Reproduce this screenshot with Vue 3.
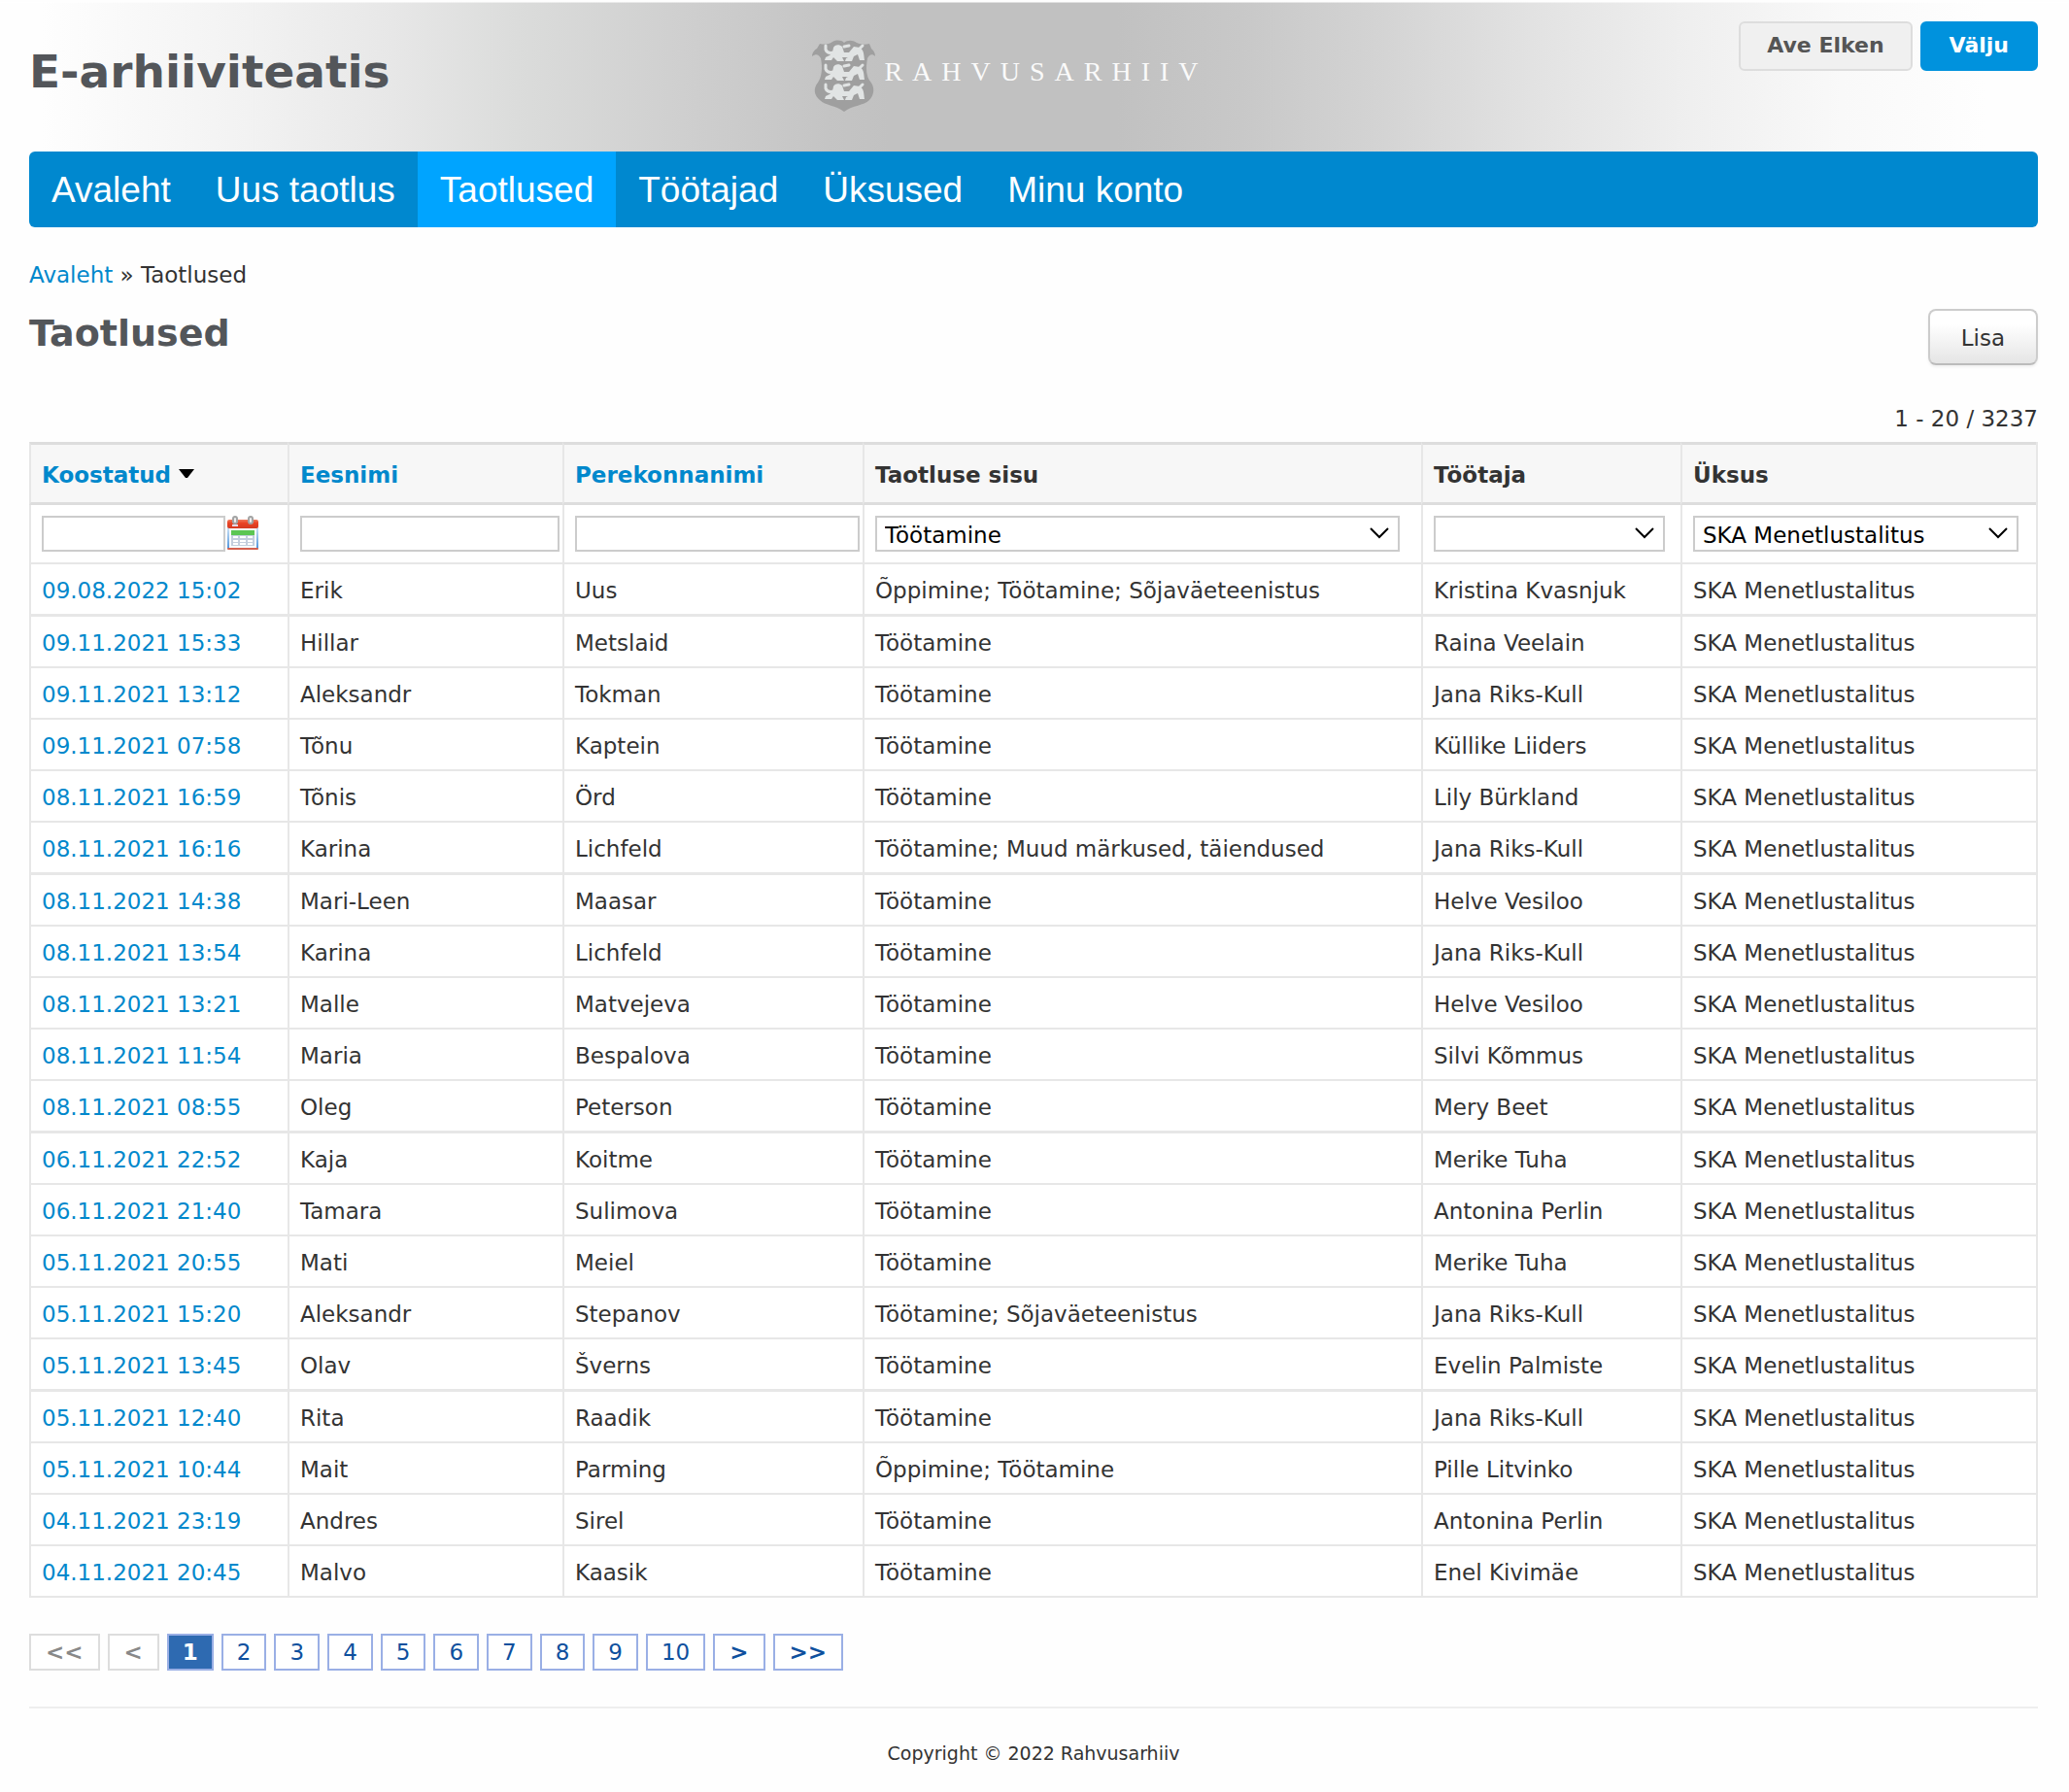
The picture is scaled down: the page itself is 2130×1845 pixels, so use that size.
<script setup>
import { ref } from 'vue'

const menu = ['Avaleht', 'Uus taotlus', 'Taotlused', 'Töötajad', 'Üksused', 'Minu konto']
const current = 'Taotlused'

const unit = 'SKA Menetlustalitus'
const content = ref('Töötamine')
const worker = ref('')
const department = ref(unit)

const rows = [
  ['09.08.2022 15:02', 'Erik', 'Uus', 'Õppimine; Töötamine; Sõjaväeteenistus', 'Kristina Kvasnjuk'],
  ['09.11.2021 15:33', 'Hillar', 'Metslaid', 'Töötamine', 'Raina Veelain'],
  ['09.11.2021 13:12', 'Aleksandr', 'Tokman', 'Töötamine', 'Jana Riks-Kull'],
  ['09.11.2021 07:58', 'Tõnu', 'Kaptein', 'Töötamine', 'Küllike Liiders'],
  ['08.11.2021 16:59', 'Tõnis', 'Örd', 'Töötamine', 'Lily Bürkland'],
  ['08.11.2021 16:16', 'Karina', 'Lichfeld', 'Töötamine; Muud märkused, täiendused', 'Jana Riks-Kull'],
  ['08.11.2021 14:38', 'Mari-Leen', 'Maasar', 'Töötamine', 'Helve Vesiloo'],
  ['08.11.2021 13:54', 'Karina', 'Lichfeld', 'Töötamine', 'Jana Riks-Kull'],
  ['08.11.2021 13:21', 'Malle', 'Matvejeva', 'Töötamine', 'Helve Vesiloo'],
  ['08.11.2021 11:54', 'Maria', 'Bespalova', 'Töötamine', 'Silvi Kõmmus'],
  ['08.11.2021 08:55', 'Oleg', 'Peterson', 'Töötamine', 'Mery Beet'],
  ['06.11.2021 22:52', 'Kaja', 'Koitme', 'Töötamine', 'Merike Tuha'],
  ['06.11.2021 21:40', 'Tamara', 'Sulimova', 'Töötamine', 'Antonina Perlin'],
  ['05.11.2021 20:55', 'Mati', 'Meiel', 'Töötamine', 'Merike Tuha'],
  ['05.11.2021 15:20', 'Aleksandr', 'Stepanov', 'Töötamine; Sõjaväeteenistus', 'Jana Riks-Kull'],
  ['05.11.2021 13:45', 'Olav', 'Šverns', 'Töötamine', 'Evelin Palmiste'],
  ['05.11.2021 12:40', 'Rita', 'Raadik', 'Töötamine', 'Jana Riks-Kull'],
  ['05.11.2021 10:44', 'Mait', 'Parming', 'Õppimine; Töötamine', 'Pille Litvinko'],
  ['04.11.2021 23:19', 'Andres', 'Sirel', 'Töötamine', 'Antonina Perlin'],
  ['04.11.2021 20:45', 'Malvo', 'Kaasik', 'Töötamine', 'Enel Kivimäe'],
]

const lions = [0, 20, 40]
</script>

<template>
  <div class="page">
    <header class="banner">
      <h1>E-arhiiviteatis</h1>
      <div class="logo">
        <svg class="shield" viewBox="0 0 66 74" aria-hidden="true">
          <path
            fill="#9f9f9f"
            d="M33 3 C36 0 42 0 46 3 C50 5 55 5 59 4 L61 9 C63 11 65 13 65 17 C62 14 59 15 57 19 C55 30 56 38 60 43 C65 49 64 57 59 62 C53 68 42 67 33 74 C24 67 14 68 8 62 C2 57 1 50 6 44 C10 38 11 29 9 19 C7 15 4 14 0 17 C0 13 3 10 5 9 L8 4 C12 5 17 5 21 2 C25 0 30 0 33 3Z"
          />
          <g v-for="y in lions" :key="y" :transform="`translate(0 ${y})`" fill="#e1e4e4">
            <path d="M22 8 C23 5 28 4 31 7 L33 13 L38 13 L43 7 L49 8 C54 11 53 16 54 21 H49 L47 15 L43 17 L41 22 H34 L35 19 L37 18 H31 L33 22 H26 L22 18 L20 21 H13 L14 18 L18 16 L21 13Z" />
            <path
              fill="none"
              stroke="#e1e4e4"
              stroke-width="3"
              stroke-linecap="round"
              d="M14 6 V10 C15 13 18 14 22 13 M33 7 L38 6 M49 9 L52 6"
            />
          </g>
        </svg>
        <span class="logo-name">RAHVUSARHIIV</span>
      </div>
      <div class="account">
        <button type="button" class="user">Ave Elken</button>
        <button type="button" class="logout">Välju</button>
      </div>
    </header>

    <nav class="menu">
      <a v-for="item in menu" :key="item" href="#" :class="{ active: item === current }">{{ item }}</a>
    </nav>

    <main>
      <p class="crumbs"><a href="#">Avaleht</a> » Taotlused</p>
      <div class="title">
        <h2>Taotlused</h2>
        <button type="button" class="add">Lisa</button>
      </div>
      <p class="count">1 - 20 / 3237</p>

      <table>
        <colgroup>
          <col class="c-date" />
          <col class="c-first" />
          <col class="c-last" />
          <col />
          <col class="c-worker" />
          <col class="c-unit" />
        </colgroup>
        <thead>
          <tr>
            <th>
              <a href="#">Koostatud</a>
              <svg class="sort" viewBox="0 0 16 10" aria-hidden="true"><path d="M0 0H16L9 9H7Z" /></svg>
            </th>
            <th><a href="#">Eesnimi</a></th>
            <th><a href="#">Perekonnanimi</a></th>
            <th>Taotluse sisu</th>
            <th>Töötaja</th>
            <th>Üksus</th>
          </tr>
        </thead>
        <tbody>
          <tr class="filters">
            <td>
              <div class="date">
                <input type="text" aria-label="Koostatud" />
                <button type="button" class="calendar" aria-label="Kalender">
                  <svg viewBox="0 0 32 35" aria-hidden="true">
                    <defs>
                      <linearGradient id="cal-red" x1="0" y1="0" x2="0" y2="1">
                        <stop offset="0" stop-color="#f0795c" />
                        <stop offset=".4" stop-color="#ea4324" />
                        <stop offset="1" stop-color="#d43a22" />
                      </linearGradient>
                      <linearGradient id="cal-blue" x1="0" y1="0" x2="0" y2="1">
                        <stop offset="0" stop-color="#d8e9f8" />
                        <stop offset="1" stop-color="#4f94dc" />
                      </linearGradient>
                    </defs>
                    <rect y="10" width="32" height="24" fill="url(#cal-blue)" />
                    <rect x="2" y="11" width="28" height="22" fill="#f7fafd" />
                    <rect y="4" width="32" height="9" rx="2" fill="url(#cal-red)" />
                    <rect y="33" width="32" height="2" rx="1" fill="#d4604f" />
                    <rect x="4" y="15" width="24" height="16" fill="#c3cedd" />
                    <rect x="4" y="15" width="24" height="5" fill="#5cc653" />
                    <path d="M6 21h5v2h-5z M13 21h6v2h-6z M21 21h5v2h-5z M6 25h5v2h-5z M13 25h6v2h-6z M21 25h5v2h-5z M6 28h5v2h-5z M13 28h6v2h-6z M21 28h5v2h-5z" fill="#fff" />
                    <path d="M5 10h6" stroke="#e6d8e4" stroke-width="2" />
                    <rect x="6" y="1" width="4" height="7" rx="2" fill="#eee" stroke="#a3a3a3" stroke-width="2" />
                    <rect x="22" y="1" width="4" height="7" rx="2" fill="#eee" stroke="#a3a3a3" stroke-width="2" />
                  </svg>
                </button>
              </div>
            </td>
            <td class="wide"><input type="text" aria-label="Eesnimi" /></td>
            <td class="wide"><input type="text" aria-label="Perekonnanimi" /></td>
            <td>
              <div class="select">
                <select v-model="content" aria-label="Taotluse sisu">
                  <option>Töötamine</option>
                </select>
                <svg viewBox="0 0 20 12" aria-hidden="true"><path d="M1 1L10 10L19 1" /></svg>
              </div>
            </td>
            <td>
              <div class="select">
                <select v-model="worker" aria-label="Töötaja">
                  <option value=""></option>
                </select>
                <svg viewBox="0 0 20 12" aria-hidden="true"><path d="M1 1L10 10L19 1" /></svg>
              </div>
            </td>
            <td>
              <div class="select">
                <select v-model="department" aria-label="Üksus">
                  <option>{{ unit }}</option>
                </select>
                <svg viewBox="0 0 20 12" aria-hidden="true"><path d="M1 1L10 10L19 1" /></svg>
              </div>
            </td>
          </tr>
        </tbody>
        <tbody class="data">
          <tr v-for="row in rows" :key="row[0]">
            <td><a href="#">{{ row[0] }}</a></td>
            <td>{{ row[1] }}</td>
            <td>{{ row[2] }}</td>
            <td>{{ row[3] }}</td>
            <td>{{ row[4] }}</td>
            <td>{{ unit }}</td>
          </tr>
        </tbody>
      </table>

      <div class="pager">
        <button type="button" class="step" disabled>&lt;&lt;</button>
        <button type="button" class="step" disabled>&lt;</button>
        <button v-for="n in 10" :key="n" type="button" :class="{ on: n === 1 }">{{ n }}</button>
        <button type="button" class="step">&gt;</button>
        <button type="button" class="step">&gt;&gt;</button>
      </div>
    </main>

    <footer>Copyright © 2022 Rahvusarhiiv</footer>
  </div>
</template>

<style>
body {
  margin: 0;
  background: #fefefe;
}
</style>

<style scoped>
.page {
  padding: 2px 32px 0 30px;
  font: 23px/28px Verdana, "DejaVu Sans", sans-serif;
  color: #333;
}
a {
  color: #0088cc;
  text-decoration: none;
}
h1, h2, p {
  margin: 0;
}
button, input, select {
  box-sizing: border-box;
  margin: 0;
  font: inherit;
}

.banner {
  display: grid;
  grid-template-columns: 1fr auto 1fr;
  height: 154px;
  margin: 0 -32px 0 -30px;
  padding: 0 32px 0 30px;
  box-sizing: border-box;
  background: linear-gradient(90deg, #fefefe 2%, #f2f2f2 12%, #e7e7e7 19%, #dbdcdb 25%, #cfcfcf 33%, #c4c4c4 40%, #c1c1c1 43%, #c1c1c1 54%, #c8c8c8 60%, #d4d4d4 67%, #e2e2e2 74%, #eeeeee 81%, #f9f9f9 89%, #fefefe 96%);
  border-top: 1px solid rgba(255, 255, 255, 0.5);
}
h1 {
  padding-top: 43px;
  font-size: 47px;
  line-height: 56px;
  color: #53565a;
}
.logo {
  display: flex;
  align-items: flex-start;
  gap: 8px;
  padding: 38px 48px 0 0;
}
.shield {
  width: 66px;
  height: 74px;
}
.logo-name {
  padding-top: 17px;
  font: 28px/32px "Liberation Serif", serif;
  letter-spacing: 10px;
  color: #fafafa;
}
.account {
  display: flex;
  justify-content: flex-end;
  align-items: flex-start;
  gap: 8px;
  padding-top: 19px;
}
.account button {
  height: 51px;
  padding: 0 27px 2px;
  border: 2px solid #ddd;
  border-radius: 6px;
  font-size: 22px;
  font-weight: bold;
}
.account .user {
  background: #f0f0f0;
  color: #555;
}
.account .logout {
  padding: 0 28px 2px;
  border-color: #0092dd;
  background: #0092dd;
  color: #fff;
}

.menu {
  display: flex;
  height: 78px;
  border-radius: 6px;
  background: #0088cf;
  overflow: hidden;
}
.menu a {
  padding: 0 23px;
  font: 37px/80px Arial, "Liberation Sans", sans-serif;
  color: #fff;
}
.menu .active {
  background: #00a4ff;
}

.crumbs {
  padding-top: 35px;
}
.title {
  display: flex;
  justify-content: space-between;
  align-items: flex-start;
  padding-top: 21px;
}
h2 {
  padding-top: 2px;
  font-size: 38px;
  line-height: 46px;
  color: #53565a;
}
.add {
  height: 58px;
  padding: 2px 32px 0;
  border: 2px solid #ccc;
  border-bottom-color: #bbb;
  border-radius: 8px;
  background: linear-gradient(#fff 25%, #e5e5e5);
  box-shadow: 0 2px 3px rgba(0, 0, 0, 0.06);
  color: #333;
}
.count {
  padding: 41px 0 10px;
  text-align: right;
}

table {
  width: 100%;
  table-layout: fixed;
  border-collapse: separate;
  border-spacing: 0;
  border-right: 2px solid #e7e7e7;
  background: #fff;
}
.c-date { width: 266px; }
.c-first { width: 283px; }
.c-last { width: 309px; }
.c-worker { width: 267px; }
.c-unit { width: 366px; }
th, td {
  box-sizing: border-box;
  padding: 0 11px;
  border-left: 2px solid #e7e7e7;
  border-bottom: 2px solid #e7e7e7;
  text-align: left;
  white-space: nowrap;
}
th {
  height: 65px;
  padding-top: 2px;
  border-top: 3px solid #ddd;
  border-bottom: 3px solid #ddd;
  background: #f7f7f7;
}
.sort {
  width: 16px;
  height: 10px;
  margin: 0 0 4px 8px;
}
.filters td {
  height: 61px;
}
.filters .wide {
  padding-right: 3px;
}
.filters input {
  display: block;
  width: 100%;
  height: 37px;
  padding: 0 8px;
  border: 2px solid #ccc;
  background: #fff;
}
.date {
  display: flex;
  gap: 2px;
}
.filters .date input {
  width: 189px;
}
.calendar {
  width: 32px;
  height: 35px;
  padding: 0;
  border: 0;
  background: none;
}
.calendar svg {
  display: block;
}
.select {
  position: relative;
  width: 98%;
}
.select select {
  display: block;
  width: 100%;
  height: 37px;
  padding: 2px 40px 0 8px;
  border: 2px solid #ccc;
  border-radius: 0;
  background: #fff;
  color: #000;
  appearance: none;
}
.select svg {
  position: absolute;
  top: 12px;
  right: 11px;
  width: 20px;
  height: 12px;
  pointer-events: none;
}
.select path {
  fill: none;
  stroke: #000;
  stroke-width: 2;
}
.data td {
  height: 53px;
  padding-top: 2px;
}
.data tr:nth-child(5n + 1) td {
  height: 54px;
  border-bottom-width: 3px;
}

.pager {
  display: flex;
  gap: 8px;
  padding: 37px 0;
}
.pager button {
  height: 38px;
  padding: 0 14px;
  border: 2px solid #9aafe5;
  background: #fff;
  line-height: 34px;
  color: #0e509e;
}
.pager .on {
  background: #2e6ab1;
  color: #fff;
  font-weight: bold;
}
.pager .step {
  padding: 0 15px;
  font-weight: bold;
}
.pager .step:disabled {
  border-color: #ddd;
  color: #888;
}

footer {
  padding: 32px 0 24px;
  border-top: 2px solid #eee;
  font-size: 19px;
  text-align: center;
}
</style>
